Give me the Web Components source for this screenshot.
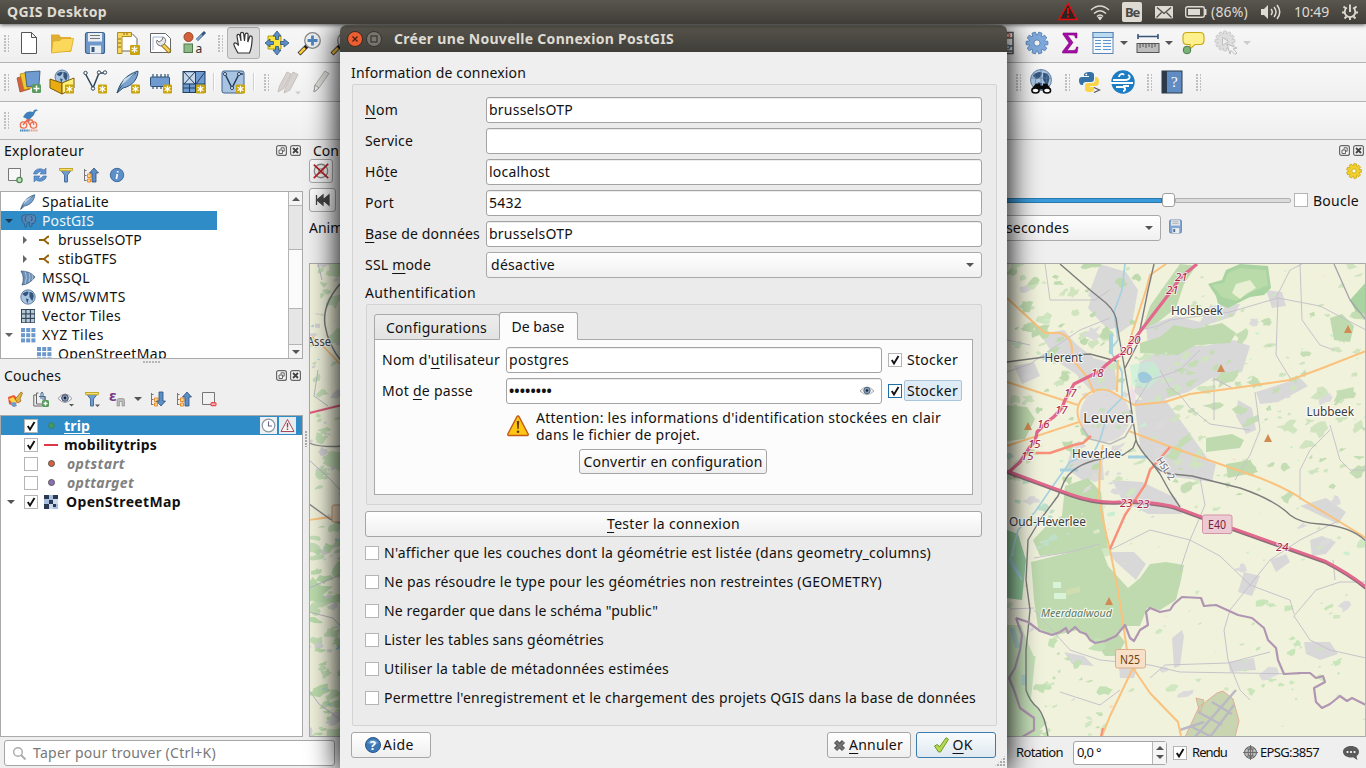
<!DOCTYPE html>
<html lang="fr">
<head>
<meta charset="utf-8">
<title>QGIS Desktop</title>
<style>
html,body{margin:0;padding:0;width:1366px;height:768px;overflow:hidden;background:#efefef;}
body{font:14px/19px "Noto Sans","Open Sans",sans-serif;color:#111;}
</style>
</head>
<body>
<qgis-desktop></qgis-desktop>
<script>
const texts = [];
function def(tag, css, html, setup) {
  customElements.define(tag, class extends HTMLElement {
    connectedCallback() {
      if (this.shadowRoot) return;
      const root = this.attachShadow({mode: 'open'});
      const body = typeof html === 'function' ? html(this) : html;
      root.innerHTML = '<style>*{box-sizing:border-box}' + css + '</style>' + body;
      if (setup) setup(this, root);
    }
  });
}

/* ---------- text run with a fixed advance width ---------- */
def('ui-text', `:host{display:inline-block;white-space:pre;flex:none}
 ::slotted(u){text-underline-offset:3px;text-decoration-thickness:1px}
 :host([link]) ::slotted(u){text-underline-offset:2px;text-decoration-skip-ink:none}`, '<slot></slot>', el => texts.push(el));

/* ---------- icons ---------- */
const star = (x, y) => `<rect x="${x}" y="${y}" width="9" height="9" rx="1" fill="#c9a40c"/><path d="M${x+4.5} ${y+1.2}v6.6M${x+1.6} ${y+2.8}l5.8 3.4M${x+7.4} ${y+2.8}l-5.8 3.4" stroke="#fff" stroke-width="1.3"/>`;
const plus = (x, y, s) => `<rect x="${x}" y="${y}" width="${s}" height="${s}" rx="1.5" fill="#5a9a60"/><path d="M${x+s/2} ${y+1.5}v${s-3}M${x+1.5} ${y+s/2}h${s-3}" stroke="#fff" stroke-width="1.4"/>`;
const gear = (cx, cy, r, n, fill, st, hole) => {
  let p = '';
  for (let i = 0; i < n; i++) {
    const a = i * 2 * Math.PI / n, w = Math.PI / n;
    [[-.85, .72], [-.5, 1], [.5, 1], [.85, .72]].forEach(([k, q]) => p += (p ? 'L' : 'M') + (cx + Math.cos(a + k * w) * r * q).toFixed(1) + ' ' + (cy + Math.sin(a + k * w) * r * q).toFixed(1));
  }
  return `<path d="${p}Z" fill="${fill}" stroke="${st}" stroke-width=".8"/><circle cx="${cx}" cy="${cy}" r="${r*.28}" fill="${hole}" stroke="${st}" stroke-width=".8"/>`;
};
const grid9 = (c, s, g, o) => { let r = ''; for (let i = 0; i < 3; i++) for (let j = 0; j < 3; j++) r += `<rect x="${o+i*(s+g)}" y="${o+j*(s+g)}" width="${s}" height="${s}" fill="${c}"/>`; return r; };
const globe = (x, y, r) => `<circle cx="${x}" cy="${y}" r="${r}" fill="#a9c4e0" stroke="#4a6c90" stroke-width=".8"/><path d="M${x-r*.8} ${y-r*.4}q${r*.5}-${r*.5} ${r*.9}-${r*.3}q-${r*.1} ${r*.5}-${r*.5} ${r*.6}zM${x+r*.2} ${y-r*.7}q${r*.6} 0 ${r*.6} ${r*.6}l-${r*.2} ${r*.7}l-${r*.4}-${r*.6}zM${x-r*.3} ${y+r*.2}l${r*.4} ${r*.1}l-${r*.2} ${r*.6}z" fill="#35557c"/>`;
const feather = '<path d="M1 23C4 13 9 5 22 1C22 8 17 16 7 18Z" fill="#7ba3cf" stroke="#2d5273" stroke-width="1"/><path d="M1 23C6 14 12 8 20 3" fill="none" stroke="#2d5273"/><path d="M5 16L19 3L8 9Z" fill="#c3d8ec"/>';
const tree = '<path d="M1.5 2v12M1.5 3.5h2M1.5 8.5h2M1.5 13.5h2" stroke="#777" fill="none"/><path d="M4.500 7h3.500v3.500H4.500zM4.500 12h3v3h-3z" fill="#ffd9a0" stroke="#f08a1c"/>';
const funnel = '<path d="M1.500 1.500h13l-5 6.500v7h-3V8Z" fill="#6f9bd1" stroke="#47719c"/><path d="M1.500 1.500h13v2.200h-13z" fill="#fbe36b" stroke="#c7a617" stroke-width=".8"/>';
const mag = '<path d="M9 15L1 23" stroke="#222" stroke-width="4"/><path d="M7 17L1.500 22.500" stroke="#fbc93d" stroke-width="2.600"/><circle cx="14.500" cy="9.500" r="7.800" fill="#efefef" stroke="#888" stroke-width="1.300"/>';
const ICONS = {
 new: '<path d="M4.500 1.500h10l5 5v16h-15zM14.500 1.500v5h5" fill="#fff" stroke="#555"/>',
 open: '<path d="M1 3.500h8l2 2.500h10v15H1z" fill="#dfae32"/><path d="M1.500 22L3 10l7-.5 2-2h11.500L21 20z" fill="#fbd85a" stroke="#d9a826" stroke-width=".8"/>',
 save: '<rect x="2.500" y="1.500" width="19" height="21" rx="2" fill="#6f99cc" stroke="#41648e" stroke-width="1.200"/><rect x="5" y="2" width="14" height="8.500" fill="#e9eef2"/><path d="M7 4.500h10M7 7.500h10" stroke="#777"/><rect x="7" y="14.500" width="11" height="8" fill="#e9eef2"/><rect x="8.500" y="16" width="3" height="5" fill="#35557c"/>',
 layout: '<path d="M2 2.500h14l5 5V20H2z" fill="#fff" stroke="#666"/><path d="M1.500 1.500h14v4h-9.500V22.500H1.500z" fill="#f7d65d" stroke="#b58c1b"/><path d="M2 8h3M2 12h3M2 16h3M8 2v2M11 2v2" stroke="#8a6a12"/>' + star(14, 14).replace(/width="9" height="9"/, 'width="10" height="10"'),
 manager: '<path d="M1.500 2.500h15l5 5V21.500H1.500z" fill="#fff" stroke="#666"/><path d="M4 19V6h10" fill="none" stroke="#9ab6d4"/><path d="M13 13l8 8" stroke="#8a6b13" stroke-width="4.500"/><path d="M13.500 13.500l7 7" stroke="#f5cf52" stroke-width="2.500"/><path d="M8 9a4 4 0 0 0 6 5l2-2a4 4 0 0 0-2-6l-1 3-3 2z" fill="#e6e6e6" stroke="#777"/>',
 style: '<circle cx="6.500" cy="6" r="4.500" fill="#d3623a" stroke="#9b4325"/><path d="M15 9l8-8" stroke="#35557c" stroke-width="3"/><path d="M15 9l5-5" stroke="#7ba3cf" stroke-width="2"/><rect x="2" y="13" width="8.500" height="8.500" fill="#8cba87" stroke="#4e7a4a"/><text x="13.500" y="21.500" font-size="12" font-family="Noto Sans" fill="#333">a</text>',
 hand: '<path d="M6 22C4 18 1 14 2 12.500c1.500-1.500 3 0 4.500 2L5 5c0-2 2.500-2.300 3 0l1 5-.5-7c0-2.300 3-2.300 3.200 0l.8 7 .6-6.500c.2-2 3-1.800 3 .2l-.3 7.300 1.700-5c.7-1.800 3-1 2.700 1C20 12 20 16 17.500 22Z" fill="#fff" stroke="#333" stroke-width="1.200"/>',
 pan: '<path d="M3 5h13v13H3z" fill="#fde43c" stroke="#b09a12"/><path d="M12 0l4 5h-2.500v3.500h-3V5H8zM12 24l-4-5h2.500v-3.500h3V19H16zM0 12l5-4v2.500h3.500v3H5V16zM24 12l-5 4v-2.500h-3.500v-3H19V8z" fill="#5c8fc9" stroke="#2d5273" stroke-width=".8"/>',
 zoomin: mag + '<path d="M14.500 4.500v10M9.500 9.500h10" stroke="#4d85bf" stroke-width="2.800"/>',
 zoomout: mag + '<path d="M9.500 9.500h10" stroke="#4d85bf" stroke-width="2.800"/>',
 datasource: '<path d="M0 8l9-3 4 14-10 3z" fill="#d3623a" stroke="#9b4325" stroke-width=".7"/><path d="M3 4l9-2 5 15-10 3z" fill="#f5c431" stroke="#a5810d" stroke-width=".7"/><path d="M8 2l15-1-1 14-12 2z" fill="#6f9bd1" stroke="#2d5273" stroke-width=".8"/>' + plus(15, 14, 9),
 geopkg: globe(12, 7, 7) + '<path d="M0 9l12 4v11L0 18z" fill="#e8ab12" stroke="#7a5a05"/><path d="M12 13l12-5v10l-12 6z" fill="#fff07a" stroke="#7a5a05"/>' + star(15, 14.5),
 vect: '<path d="M2 3L10 18L16 3H22" fill="none" stroke="#2f4458" stroke-width="1.500"/><g fill="#fff" stroke="#2f4458"><circle cx="2.500" cy="3" r="1.700"/><circle cx="10" cy="18.500" r="1.700"/><circle cx="16" cy="2.500" r="1.700"/><circle cx="22" cy="2.500" r="1.700"/></g>' + star(15, 14.5),
 feather: feather + star(15, 14.5), plume: feather,
 chip: '<path d="M4 4v15M8 4v15M12 4v15M16 4v15M19 4v15" stroke="#2d5273" stroke-width="1.200"/><rect x="1.500" y="7" width="19" height="9.500" rx="1" fill="#6f9bd1" stroke="#2d5273"/>' + star(14, 14.5),
 mesh: '<rect x="1" y="1.500" width="22" height="21" fill="#6f9bd1" stroke="#23415e"/><rect x="2" y="2.500" width="11" height="11" fill="#c7d8ea"/><path d="M1 14h22M13.500 1v22M2 2l11 12M13 2L2 14M14 14L23 2M7.500 14v9M1 18h12" stroke="#23415e" stroke-width="1" fill="none"/>' + star(14, 14.5),
 virt: '<rect x="1" y="1" width="22" height="22" rx="2" fill="#a9c3e2" stroke="#41648e"/><path d="M4 4L11 18L18 4H22" fill="none" stroke="#23415e" stroke-width="1.500"/><g fill="#fff" stroke="#23415e"><circle cx="4" cy="4" r="1.500"/><circle cx="11" cy="18" r="1.500"/><circle cx="18" cy="4" r="1.500"/></g>' + star(15, 14.5),
 pencils: '<g fill="#d8d2cf" stroke="#bdb8b6" stroke-width=".8"><path d="M1 22l1.500-6L10 2l4 2L6 19z"/><path d="M7 23l1.500-6L16 2l5 2.500L13 20z"/></g><path d="M18 21.500h6l-3 3z" fill="#ccc"/>',
 pencil: '<path d="M4 22l1-7L15 1l4 2.500L9 18z" fill="#dddbd6" stroke="#b0b0b0"/><path d="M4 22l1-7 4 3z" fill="#eee" stroke="#999"/>',
 mobility: '<path d="M8 5c2-3 6-3 8-2 1-3 4-3 5-1-2-1-3 1-4 4l-4 4-1 4-2-1v-3l-4-2z" fill="#3f7fbb"/><g fill="none" stroke="#ee6d4d" stroke-width="1.300"><circle cx="6.500" cy="16" r="3.200"/><circle cx="16.500" cy="16" r="3.200"/><path d="M6 16l4-5h5l2 5M10 11l3 5"/></g><path d="M3 21.500h9" stroke="#3f7fbb" stroke-width="2" stroke-dasharray="1.300 .5"/><path d="M12 21.500h9" stroke="#ee9d85" stroke-width="2" stroke-dasharray="1.300 .5"/>',
 abacus: '<path d="M1 1.500h21v21H1zM1 7h21M1 15h21M1 20h21" fill="none" stroke="#555" stroke-width="1.500"/><g fill="#f2b3a8" stroke="#b43c2c"><circle cx="17" cy="4.500" r="2"/><circle cx="11" cy="4.500" r="2"/></g><circle cx="17" cy="16" r="2" fill="#a9c9e8" stroke="#35658c"/>',
 gear: gear(12, 12, 11, 10, '#7fa9dc', '#4a79b0', '#f4f4f4'),
 ygear: gear(8, 8, 7.5, 9, '#f1cf2c', '#c9a40c', '#fff'),
 sigma: '<path d="M5 2h14v5h-1.500C17 4.500 16 4 14 4H9.500l5.500 7.500L9 19.500h6c2 0 3-1 3.500-3.500H20l-1 6H4.500v-1.500L11 12 5 3.500z" fill="#a50ba5" stroke="#7c077c" stroke-width=".6"/>',
 table: '<rect x="2" y="1.500" width="20" height="21" fill="#f6fafd" stroke="#5c87b5"/><rect x="2" y="1.500" width="20" height="5" fill="#b9dcf2" stroke="#5c87b5"/><path d="M4 9.500h6M4 12.500h6M4 15.500h6M4 18.500h6M12 9.500h8M12 12.500h8M12 15.500h8M12 18.500h8" stroke="#5c94cc" stroke-width="1.200"/>',
 ruler: '<path d="M2 5.500h20M2 3v5M22 3v5" stroke="#35557c" stroke-width="1.600"/><rect x="1" y="12.500" width="22" height="9" fill="#bdbdbd" stroke="#555"/><path d="M4 13v4M7 13v3M10 13v4M13 13v3M16 13v4M19 13v3" stroke="#555"/>',
 tip: '<path d="M6 1.500h13q4 0 4 4v4q0 4-4 4h-5L9 18l0-4.500H6q-4 0-4-4v-4q0-4 4-4z" fill="#fdf08d" stroke="#c9a80f" stroke-width="1.100"/><circle cx="6" cy="19" r="3.800" fill="#79b377" stroke="#4e7a4a"/>',
 faded: gear(11, 10, 10, 12, '#dedede', '#c4c4c4', '#eee') + '<path d="M8.500 6.500l6 4-6 4z" fill="#eee" stroke="#c0c0c0"/><path d="M13 13l10 4-4 1 4 4-2 1.500-4-4-1 3.500z" fill="#f3f3f3" stroke="#bbb"/>',
 search: globe(12, 10, 10.5) + '<path d="M12 0v14M2 8h20M5 3q3 6 1 12M19 3q-3 6-1 12" stroke="#587899" fill="none" stroke-width=".7"/><path d="M7 13.500h4v2h3v-2h4l4 6H2z" fill="#0a0a0a"/><ellipse cx="6.500" cy="20.500" rx="3.600" ry="2.500" fill="#fff" stroke="#0a0a0a" stroke-width="1.500"/><ellipse cx="18" cy="20.500" rx="3.600" ry="2.500" fill="#fff" stroke="#0a0a0a" stroke-width="1.500"/>',
 python: '<path d="M11 2c4 0 5 1 5 3v4c0 2-1 3-3 3H8c-2 0-3 1-3 3H4c-2 0-3-2-3-4.500S2 7 4 7h7V6H6V4.500C6 3 8 2 11 2z" fill="#3572a5"/><circle cx="8.300" cy="4.500" r=".9" fill="#fff"/><path d="M12 22c-4 0-5-1-5-3v-3c0-2 1-3 3-3h4c2 0 3-1 3-3V7h1c2 0 3 2 3 4.500S20 16 18 16h-6v1h4v2c0 2-1 3-4 3z" fill="#fbd447"/><path d="M16 17.500l5.500 2.500-5.500 2.500" fill="none" stroke="#555" stroke-width="1.200"/>',
 wind: '<circle cx="12" cy="12" r="11.700" fill="#1d7dc4"/><g fill="none" stroke="#fff" stroke-width="1.800"><path d="M2 10h12c5 0 6-4 3-5M0 13h22M5 17h6c4 0 4 4 1 4M8 7c0-3 4-4 5-2M12 16h6"/></g>',
 book: '<rect x="2" y="1" width="20" height="22" fill="#5f8cc2" stroke="#2b3b4c"/><rect x="2" y="1" width="5" height="22" fill="#2b3b4c"/><text x="11" y="17" font-size="15" font-family="Liberation Serif" fill="#fff">?</text>',
 addbox: '<path d="M1.500 1.500h12v12h-12z" fill="#f7f7f7" stroke="#777"/><circle cx="12.500" cy="13" r="2.600" fill="#bfe0b8" stroke="#4d8a52" stroke-width="1.300"/>',
 refresh: '<path d="M1.500 7A6.500 6 0 0 1 12 3l2-2v6H8l2-2A4 4 0 0 0 5 7zM14.500 9A6.500 6 0 0 1 4 13l-2 2V9h6l-2 2a4 4 0 0 0 5-2z" fill="#5f93d0" stroke="#3d70ab" stroke-width=".6"/>',
 funnel, funnelm: funnel + '<path d="M11 13.500h5l-2.500 2.500z" fill="#555"/>',
 collapse: tree + '<path d="M11 1l4.500 5H13v9H9V6H6.500z" fill="#5c8fc9" stroke="#2d5273" stroke-width=".8"/>',
 expand: tree + '<path d="M11 15L6.500 10H9V1h4v9h2.500z" fill="#5c8fc9" stroke="#2d5273" stroke-width=".8"/>',
 info: '<circle cx="8" cy="8" r="6.700" fill="#5d8fc9" stroke="#3f6ca0"/><path d="M8.700 4v1.500M8.300 7l-.9 5" stroke="#fff" stroke-width="1.700"/>',
 brush: '<path d="M1 6l6-2 4 4-3 8-6-3z" fill="#f0552d"/><path d="M2 8l4-2 4 5-4 2z" fill="#fbd84a"/><path d="M3 12l5-1 2 4-4 1z" fill="#6f9bd1"/><path d="M8 8l2-2 4-5 1.500 1-2.500 6 1 2-3 2z" fill="#e2b23d" stroke="#8b6517" stroke-width=".7"/>',
 group: '<path d="M3 4H.8v11H9M5.500 2H3.500v11H12V5" fill="none" stroke="#666"/><path d="M6 5.500h6V12M8 8V2q1-1.500 2 0v7" fill="none" stroke="#3f6c94"/>' + plus(9, 9, 7),
 eye: '<path d="M1 8q7-8 14 0q-7 7-14 0z" fill="#f3f3f3" stroke="#aaa"/><circle cx="8" cy="7.500" r="3.200" fill="#7fa4cf" stroke="#567"/><circle cx="8" cy="7.500" r="1.300" fill="#222"/>',
 eyem: '<path d="M0 7.500q7-9 14 0q-7 8-14 0z" fill="#f3f3f3" stroke="#999"/><circle cx="7" cy="7" r="3.300" fill="#86a8cf" stroke="#446"/><circle cx="7" cy="7" r="1.400" fill="#222"/><path d="M11 13h5l-2.500 2.500z" fill="#555"/>',
 eps: '<text x="0" y="10" font-size="15" font-weight="700" font-family="Noto Sans" fill="#7a3b86">ε</text><path d="M8 15V9.500q0-2 2-2h4q1.500 0 1.500 2V15h-2.500v-4.500h-2.500V15z" fill="#bbb" stroke="#888" stroke-width=".6"/>',
 remove: '<path d="M1.500 1.500h12v12h-12z" fill="#f2f2f2" stroke="#777"/><rect x="9.500" y="11" width="6" height="4.200" rx="1.500" fill="#e8444a"/><path d="M10.500 13.100h4" stroke="#fff"/>',
 down: '<path d="M0 0h8l-4 4z" fill="currentColor"/>', up: '<path d="M0 4h8L4 0z" fill="currentColor"/>', right: '<path d="M0 0v8l4-4z" fill="currentColor"/>',
 elephant: '<path d="M2 3q2-2 5-1 4-1 7 0 3 2 1 7l-2 2-1-1v3q-1 2-2.500 0V9L7 10q0 4-1 4.500-1.500 0-1.800-4Q1 8 2 3z" fill="#5386b4" stroke="#2a5d88" stroke-width=".9"/><path d="M6 3q-2 3 0 6M11 3q2 2 .5 5" fill="none" stroke="#2a5d88"/>',
 conn: '<path d="M0 6h5M10 2.500q-1.500 0-2 1L5 6l3 2.500q.5 1 2 1" fill="none" stroke="#94600b" stroke-width="1.900"/>',
 mssql: '<path d="M1 1q9 0 14 6-5 7-13 8 3-7-1-14z" fill="#6d90b8" stroke="#34506d" stroke-width=".7"/><path d="M5 1.500q3 6 0 12.500M9 3q2 4 0 9M12 4.500q1.500 3 0 5.500" stroke="#c9d8e8" fill="none" stroke-width=".7"/>',
 globe: globe(8, 8, 7.2),
 vtiles: '<rect x="1" y="1" width="14" height="14" fill="#33485c"/>' + grid9('#b8cad8', 3.300, 1.200, 2),
 xyz: grid9('#6d98cb', 4, 1.200, 1),
 checker: '<rect width="14" height="14" fill="#a9bfdf"/><path d="M0 0h5v4H0zM9 0h5v4H9zM5 5h4v4H5zM0 9h5v5H0z" fill="#2a3a50"/><path d="M9 4h5v5H9zM5 9h4v5H5z" fill="#cfdcee"/><path d="M9 9h3v3H9z" fill="#2a3a50"/>',
 clock: '<rect width="17" height="17" fill="#eef1f4"/><circle cx="8.500" cy="8.500" r="6.300" fill="#fff" stroke="#8b98a3" stroke-width="1.200"/><path d="M8.500 4.500v4.500h3.500" fill="none" stroke="#668" stroke-width="1.100"/>',
 alert: '<rect width="17" height="17" fill="#e6ebef"/><path d="M8.500 2.500L15 14.500H2z" fill="#f7f7f7" stroke="#a34b58"/><path d="M8.500 6v4.500M8.500 11.500v1.500" stroke="#a3384a" stroke-width="1.400"/>',
 wifi: '<g fill="none" stroke="#dfdbd2" stroke-width="1.600"><path d="M1 7q9-8 18 0M4 10.500q6-5.500 12 0M7 13.500q3-3 6 0"/></g><path d="M10 17.500l-2.500-3q2.500-2 5 0z" fill="#dfdbd2"/>',
 redtri: '<path d="M10 1.500L19 17.500H1z" fill="#2b2420" stroke="#e01010" stroke-width="1.400"/><path d="M10 6v6M10 13.500v2" stroke="#e01010" stroke-width="1.700"/>',
 mail: '<rect x="0" y="0" width="18" height="12.500" rx="1" fill="#dfdbd2"/><path d="M2 1.500l7 6 7-6M1.500 11.500l5-5M16.500 11.500l-5-5" fill="none" stroke="#4a4842" stroke-width="1.200"/>',
 battery: '<rect x=".7" y=".7" width="18.600" height="10.600" rx="2" fill="none" stroke="#dfdbd2" stroke-width="1.400"/><rect x="3" y="3" width="12" height="6" fill="#dfdbd2"/><path d="M20.500 3v6" stroke="#dfdbd2" stroke-width="2"/>',
 sound: '<path d="M0 5h3l4-4v14L3 11H0z" fill="#dfdbd2"/><g fill="none" stroke="#dfdbd2" stroke-width="1.500"><path d="M10 5q2.500 3 0 6M13 3q4 5 0 10M16 1q5.500 7 0 14"/></g>',
 power: '<path d="M4.800 3.600a5.300 5.300 0 1 0 6.400 0" fill="none" stroke="#dfdbd2" stroke-width="1.800"/><g stroke="#dfdbd2" stroke-width="1.900"><path d="M8 .5v7.500M1.500 2.500l2.500 2M14.500 2.500l-2.500 2M0 8.500h3M16 8.500h-3M2.500 14.500l2-2M13.500 14.500l-2-2M8 16v-2.500"/></g>',
 clockx: '<circle cx="10" cy="10" r="7.500" fill="#eee" stroke="#888" stroke-width="1.400"/><circle cx="10" cy="10" r="3" fill="none" stroke="#aaa"/><path d="M2 3l16 15M18 2L2 18" stroke="#b32025" stroke-width="1.900"/>',
 rewind: '<path d="M1.500 1v10M8 1v10L2 6zM14 1v10L8 6z" fill="#444" stroke="#444" stroke-width="1.300"/>',
 float: '<rect x=".6" y=".6" width="9.800" height="9.800" rx="2" fill="#f6f6f6" stroke="#666" stroke-width="1.200"/><path d="M3 5h3.500v3.500H3zM5 4.500V2.800h3.200V6.200H7" fill="none" stroke="#555" stroke-width=".9"/>',
 close: '<rect x=".6" y=".6" width="9.800" height="9.800" rx="2" fill="#f6f6f6" stroke="#666" stroke-width="1.200"/><path d="M3 3l5 5M8 3L3 8" stroke="#444" stroke-width="1.900"/>',
 warn: '<path d="M12 2q.8 0 1.200.9l9 17.200q.4 1.400-.9 1.400H2.700q-1.300 0-.9-1.400l9-17.200Q11.200 2 12 2z" fill="#fcc613" stroke="#c35a1c" stroke-width="1.300"/><path d="M10.800 7h2.400l-.6 8h-1.200z" fill="#6a3410"/><circle cx="12" cy="17.800" r="1.300" fill="#6a3410"/>',
 help: '<circle cx="8" cy="8" r="7.500" fill="#3b77b2" stroke="#28598b"/><path d="M2 6q6-7 12 0-6 3-12 0z" fill="#7aa9d8" opacity=".6"/><text x="4.700" y="12.800" font-size="13" font-weight="700" font-family="Noto Sans" fill="#fff">?</text>',
 cross: '<path d="M2.500 2.500l8 8M10.500 2.500l-8 8" stroke="#555" stroke-width="4.400"/><path d="M3 3l7.500 7.500M10.500 3L3 10.500" stroke="#777" stroke-width="2"/>',
 ok: '<path d="M1.500 9l3-1.500 2 2.500L13 .8l2.500 1.500L7.500 15H5.500z" fill="#b4d957" stroke="#6f9a1e"/>',
 glass: '<circle cx="6" cy="6" r="4.300" fill="none" stroke="#aaa" stroke-width="1.400"/><path d="M9 9l4.500 4.500" stroke="#aaa" stroke-width="1.800"/>',
 proj: '<circle cx="7.500" cy="7.500" r="6" fill="#bbb" stroke="#666"/><path d="M0 7.500h15M7.500 0v15M3 3.500q4.500 2 9 0M3 11.500q4.500-2 9 0M7.500 1.500q-5 6 0 12q5-6 0-12" fill="none" stroke="#666" stroke-width=".9"/>',
 bubble: '<path d="M8 1c4.500 0 8 2.400 8 5.800 0 2-1 3.400-2.500 4.400L14.500 15 10 12.300Q9 12.600 8 12.600c-4.500 0-8-2.500-8-5.800S3.500 1 8 1z" fill="#5a5a5a"/><g fill="#fff"><circle cx="4.500" cy="7" r="1.100"/><circle cx="8" cy="7" r="1.100"/><circle cx="11.500" cy="7" r="1.100"/></g>',
 wclose: '<circle cx="8" cy="8" r="7.500" fill="#ec5e31" stroke="#3a2a22"/><path d="M5.500 5.500l5 5M10.500 5.500l-5 5" stroke="#4a2214" stroke-width="1.300"/>',
 wmax: '<circle cx="8" cy="8" r="7.500" fill="#77756e" stroke="#34332f"/><rect x="5" y="5" width="6" height="6" fill="none" stroke="#35342f" stroke-width="1.200"/>'
};
def('q-icon', ':host{display:inline-flex;flex:none}svg{display:block;overflow:visible}', el => {
  const w = +el.getAttribute('w') || +el.getAttribute('s') || 16, h = +el.getAttribute('h') || w;
  const box = el.getAttribute('box') || `${w} ${h}`;
  return `<svg width="${w}" height="${h}" viewBox="0 0 ${box}">${ICONS[el.getAttribute('name')]}</svg>`;
});
const ic = (n, box, s) => `<q-icon name="${n}" s="${s||box}" box="${box} ${box}"></q-icon>`;

/* ---------- controls ---------- */
def('ui-field', `:host{display:flex;align-items:center;height:26px;padding:0 6px 0 2px;background:#fff;border:1px solid #a3a3a3;border-radius:3px;box-sizing:border-box;box-shadow:inset 0 1px 0 #ececec}`, '<slot></slot>');
def('ui-combo', `:host{display:flex;align-items:center;justify-content:space-between;height:26px;padding:0 7px 0 4px;background:linear-gradient(#fff,#f0f0f0);border:1px solid #a9a9a9;border-radius:3px;box-sizing:border-box;color:#111}q-icon{color:#555}`, '<slot></slot><q-icon name="down" w="8" h="4"></q-icon>');
def('ui-button', `:host{display:flex;align-items:center;justify-content:center;gap:3px;height:26px;background:linear-gradient(#fff,#efefef);border:1px solid #a6a6a6;border-radius:3px;box-sizing:border-box}
 :host([primary]){background:linear-gradient(#f8fbfd,#dfe9f0);border-color:#3a7cae}`, '<slot></slot>');
def('ui-check', `:host{display:flex;align-items:center;gap:5px}
 i{width:14px;height:14px;background:#fff;border:1px solid #b5b5b5;display:block;flex:none}
 :host([focus]) i{border:1px solid #1f6ea5}
 :host([focus]) span{background:#dfebf5;border:1px solid #a9c5dc;border-radius:2px;margin:0 -4px 0 -3px;padding:0 3px 0 2px}
 span{display:flex}svg{display:block}`,
 el => `<i>${el.hasAttribute('on') ? '<svg width="12" height="12"><path d="M2.800 6L5 9.500 9.500 2" fill="none" stroke="#111" stroke-width="1.900"/></svg>' : ''}</i><span><slot></slot></span>`);
def('ui-grip', `:host{display:block;width:5px;height:17px;flex:none;background:radial-gradient(circle at 1px 1px,#bdbdbd .7px,transparent .9px) 0 0/4px 3px}`, '');
def('ui-sep', ':host{display:block;width:1px;height:18px;background:#cfcfcf;flex:none;box-shadow:1px 0 #fff}', '');
def('ui-toolbar', `:host{display:flex;align-items:center;height:39px;border-bottom:1px solid #b4b4b4;background:linear-gradient(#f8f8f8,#efefef);box-sizing:border-box}
 div{display:flex;align-items:center;height:100%}.l{width:999px;padding-left:4px;overflow:hidden}.r{flex:1;overflow:hidden}`,
 '<div class="l"><slot></slot></div><div class="r"><slot name="right"></slot></div>');
def('tool-item', `:host{display:flex;align-items:center;justify-content:center;flex:none;width:33px;height:32px;box-sizing:border-box;color:#555}
 :host([active]){background:#dcdcdc;border:1px solid #b0b0b0;border-radius:3px}`, '<slot></slot>');
def('dock-header', `:host{display:flex;align-items:center;height:21px;padding:0 2px 0 4px;gap:3px;box-sizing:border-box}
 slot{display:block;flex:1}`, '<slot></slot><q-icon name="float" s="11"></q-icon><q-icon name="close" s="11"></q-icon>');

/* ---------- top panel ---------- */
def('desktop-bar', `:host{display:flex;align-items:center;height:24px;padding:0 8px 0 7px;background:linear-gradient(#59564e,#3f3d38);color:#dfdbd2;box-sizing:border-box;position:relative;z-index:3;box-shadow:0 1px 4px rgba(0,0,0,.65)}
 .t{font-weight:700;flex:1}.b{background:#dfdbd2;color:#4a4842;font-weight:700;font-size:13px;line-height:20px;width:20px;height:20px;border-radius:2px;text-align:center;margin:0 12px}
 div{display:flex;align-items:center}ui-text{line-height:22px}`,
 `<div class="t"><ui-text w="100">QGIS Desktop</ui-text></div><div>
 <q-icon name="redtri" s="20" box="20 20"></q-icon><q-icon name="wifi" s="20" box="20 20" style="margin:2px 0 0 12px"></q-icon>
 <div class="b"><ui-text w="14" style="margin-left:3px">Be</ui-text></div><q-icon name="mail" w="18" h="13" style="margin-left:1px"></q-icon>
 <q-icon name="battery" w="22" h="12" style="margin-left:12px"></q-icon><ui-text w="37" style="margin-left:4px">(86%)</ui-text>
 <q-icon name="sound" w="20" h="16" style="margin-left:13px"></q-icon><ui-text w="35" style="margin-left:13px">10:49</ui-text>
 <q-icon name="power" s="16" style="margin-left:13px"></q-icon></div>`);

/* ---------- browser dock ---------- */
def('tree-row', `:host{display:flex;align-items:center;height:19px;box-sizing:border-box;color:#111}
 .a{width:16px;display:flex;justify-content:center;color:#666}.i{width:16px;display:flex;justify-content:center;margin:0 6px 0 3px}
 :host([selected]){background:#308cc6;color:#eef6fb;width:216px}:host([selected]) .a{color:#1c3a52}
 :host([child]){padding-left:16px}`,
 el => { const a = el.getAttribute('arrow'); const n = el.getAttribute('icon');
  return `<span class="a">${a ? `<q-icon name="${a}" w="${a==='right'?4:8}" h="${a==='right'?8:4}"></q-icon>` : ''}</span><span class="i">${n==='conn' ? '<q-icon name="conn" w="10" h="12"></q-icon>' : `<q-icon name="${n}" s="16" box="${n==='plume'?'24 24':'16 16'}"></q-icon>`}</span><slot></slot>`; });
def('ui-scroll', `:host{display:flex;flex-direction:column;width:14px;border-left:1px solid #b4b4b4;background:#e6e6e6;box-sizing:border-box;color:#555}
 b{display:flex;height:14px;align-items:center;justify-content:center;background:#f4f4f4;border-bottom:1px solid #b4b4b4;box-sizing:border-box}
 b:last-child{border-bottom:0;border-top:1px solid #b4b4b4}i{height:60px;margin-top:43px;background:#fbfbfb;border:1px solid #b4b4b4;border-width:1px 0;box-sizing:border-box}em{flex:1}`,
 '<b><q-icon name="up" w="8" h="4"></q-icon></b><i></i><em></em><b><q-icon name="down" w="8" h="4"></q-icon></b>');
def('browser-dock', `:host{display:block}.tools{display:flex;align-items:center;gap:9.400px;height:27px;padding-left:7px}
 .box{display:flex;height:168px;margin-top:3px;border:1px solid #aaa;background:#fff;overflow:hidden;box-sizing:border-box}.rows{flex:1;overflow:hidden}
 .dots{height:6px;width:18px;margin:0 auto;background:radial-gradient(circle at 1px 1px,#b5b5b5 .8px,transparent 1px) 0 2px/3px 8px repeat-x}`,
 `<dock-header><ui-text w="80">Explorateur</ui-text></dock-header>
 <div class="tools">${['addbox','refresh','funnel','collapse','info'].map(n => ic(n,16)).join('')}</div>
 <div class="box"><div class="rows">
 <tree-row icon="plume"><ui-text w="67">SpatiaLite</ui-text></tree-row>
 <tree-row icon="elephant" arrow="down" selected><ui-text w="52">PostGIS</ui-text></tree-row>
 <tree-row icon="conn" arrow="right" child><ui-text w="84">brusselsOTP</ui-text></tree-row>
 <tree-row icon="conn" arrow="right" child><ui-text w="59">stibGTFS</ui-text></tree-row>
 <tree-row icon="mssql"><ui-text w="48">MSSQL</ui-text></tree-row>
 <tree-row icon="globe"><ui-text w="84">WMS/WMTS</ui-text></tree-row>
 <tree-row icon="vtiles"><ui-text w="79">Vector Tiles</ui-text></tree-row>
 <tree-row icon="xyz" arrow="down"><ui-text w="62">XYZ Tiles</ui-text></tree-row>
 <tree-row icon="xyz" child><ui-text w="109">OpenStreetMap</ui-text></tree-row>
 </div><ui-scroll></ui-scroll></div><div class="dots"></div>`);

/* ---------- layers dock ---------- */
def('layer-row', `:host{display:flex;align-items:center;height:19px;font-weight:700;box-sizing:border-box;padding-right:6px}
 .a{width:20px;display:flex;justify-content:center;color:#555;margin-left:0}.s{width:16px;display:flex;align-items:center;justify-content:center;margin:0 5px 0 5px}
 i{display:block;width:7px;height:7px;border-radius:50%;border:1px solid #555;background:var(--c)}i.line{width:14px;height:2px;border:0;border-radius:0}
 slot{display:block;flex:1}:host([selected]){background:#308cc6;color:#fff}:host([selected]) i{border-color:#3a7d78}:host([off]){color:#808080;font-style:italic}.e{display:flex;gap:2px}`,
 el => `<span class="a">${el.hasAttribute('arrow') ? '<q-icon name="down" w="8" h="4"></q-icon>' : ''}</span><span style="width:3px"></span><ui-check ${el.hasAttribute('off') ? '' : 'on'}></ui-check><span class="s" style="margin-left:0">${el.getAttribute('kind')==='raster' ? '<q-icon name="checker" s="14"></q-icon>' : `<i class="${el.getAttribute('kind')}" style="--c:${el.getAttribute('color')}"></i>`}</span><slot></slot>${el.hasAttribute('selected') ? '<span class="e"><q-icon name="clock" s="17"></q-icon><q-icon name="alert" s="17"></q-icon></span>' : ''}`);
def('layers-dock', `:host{display:flex;flex-direction:column;flex:1}.tools{display:flex;align-items:center;height:27px;padding-left:7px;gap:9.500px}
 .box{flex:1;margin-top:3px;border:1px solid #aaa;background:#fff}.d{color:#555;margin:0 -1px}`,
 `<dock-header style="height:20px"><ui-text w="57">Couches</ui-text></dock-header>
 <div class="tools">${['brush','group','eyem','funnelm','eps'].map(n => ic(n,16)).join('')}<q-icon class="d" name="down" w="8" h="4"></q-icon>${['expand','collapse','remove'].map(n => ic(n,16)).join('')}</div>
 <div class="box">
 <layer-row selected color="#3e9a62"><ui-text w="26" link><u>trip</u></ui-text></layer-row>
 <layer-row kind="line" color="#e0364a"><ui-text w="93">mobilitytrips</ui-text></layer-row>
 <layer-row off color="#d9603a"><ui-text w="58" style="margin-left:3px">optstart</ui-text></layer-row>
 <layer-row off color="#8d71b4"><ui-text w="67" style="margin-left:3px">opttarget</ui-text></layer-row>
 <layer-row kind="raster" arrow><ui-text w="115" style="margin-left:2px">OpenStreetMap</ui-text></layer-row>
 </div>`);

/* ---------- temporal controller ---------- */
def('ui-slider', `:host{display:flex;align-items:center;height:14px}
 .f{height:5px;background:#3a9bdc;border:1px solid #2a79ad;box-sizing:border-box;flex:1}.e{height:5px;width:116px;border:1px solid #b0b0b0;border-radius:0 2px 2px 0;background:#dcdcdc;box-sizing:border-box}
 .k{width:13px;height:14px;border:1px solid #a0a0a0;border-radius:3px;background:#fff;box-sizing:border-box}`, '<div class="f"></div><div class="k"></div><div class="e"></div>');
def('temporal-dock', `:host{display:block;height:123px;overflow:hidden}.row{display:flex;justify-content:space-between;align-items:center}
 ui-button{width:27px;height:24px}.right{display:flex;align-items:center}ui-text{line-height:19px}`,
 `<dock-header><ui-text>Con</ui-text></dock-header>
 <div class="row" style="height:20px;align-items:flex-start;margin-top:-2px"><ui-button style="width:24px">${ic('clockx',20,18)}</ui-button><q-icon name="ygear" s="16" box="16 16" style="margin:4px 4px 0 0"></q-icon></div>
 <div class="row" style="height:28px;margin-top:7px"><ui-button><q-icon name="rewind" w="15" h="12"></q-icon></ui-button>
 <div class="right"><ui-slider style="width:285px;margin-right:3px"></ui-slider><ui-check><ui-text w="46">Boucle</ui-text></ui-check><span style="width:7px"></span></div></div>
 <div class="row" style="height:27px;margin-top:0"><ui-text>Anim</ui-text><div class="right"><ui-combo style="width:160px;padding-right:7px;padding-left:4px"><ui-text w="63">secondes</ui-text></ui-combo><q-icon name="save" s="15" box="24 24" style="margin:0 183px 3px 7px;opacity:.85"></q-icon></div></div>`);

/* ---------- map ---------- */
function buildMap() {
  let seed = 77;
  const R = () => (seed = (seed * 16807) % 2147483647) / 2147483647;
  const blob = (x, y, rx, ry) => {
    let p = ''; const n = 8 + (R() * 6 | 0), rot = -.7 + R() * .8;
    for (let i = 0; i < n; i++) { const a = i * 6.283 / n, q = .4 + R() * .8, u = Math.cos(a) * rx * q, v = Math.sin(a) * ry * q;
      p += (i ? 'L' : 'M') + (x + u * Math.cos(rot) - v * Math.sin(rot)).toFixed(1) + ' ' + (y + u * Math.sin(rot) + v * Math.cos(rot)).toFixed(1); }
    return p + 'Z';
  };
  const many = (n, x0, x1, y0, y1, s, c) => { let d = ''; while (n--) { const k = .25 + 1.3 * R() * R(); d += blob(x0 + R() * (x1 - x0), y0 + R() * (y1 - y0), s * k, s * k * (.35 + R() * .5)); } return `<path d="${d}" fill="${c}"/>`; };
  const L = (d, c, w, x = '') => `<path d="${d}" fill="none" stroke="${c}" stroke-width="${w}" stroke-linejoin="round" ${x}/>`;
  const G = '#bfdaaf', U = '#d9d8d9', W = '#a6d1df', O = '#fac27d', M = '#e2688d', RL = '#7c7c7c';
  let s = '<rect x="309" y="263" width="1057" height="474" fill="#f1f2dc"/>';
  s += `<path d="M1100 264l26 8 12 18-6 34-14 10-10-28-20-10zM1040 334l24-4 12 14 18 14 20 6 4 26-26 2-16-18-18-12zM1094 290l20 6 8 30-14 4-20-22zM1146 326l30-10 24 6 10-16 30-2-6 12-30 10-16 16-40 4zM1140 362l30-18 34 2 30-6 16 6-8 26-30 6-24 14-40 12-14-12zM1134 400l30-2 22 30 24 34 -16 8-34-8-20-16zM1072 448l30 6 2 26-22 0-16-12zM1136 444l44 8 36 12-4 18-46-6zM1112 480l30 2 34 16 6 16-34 0-26-14zM1108 552l26 0 12 12-10 16-20-18zM1118 656l22 0-6 22-14 0zM1244 572l16 4-8 20-14-4zM1310 540l12-4 14 6-10 12-14 2zM1304 642l26 0 8 12-18 6-14-6zM1270 560l16-6 4 8-14 10zM1256 392l44-14 8 8-30 16-18 2zM1238 400l14 8 4 22-10 4-10-18zM1266 290l16 2 4 14-14 2zM1014 366l20-4 6 14-18 8zM1064 652l20 4 10 10-22-2zM1172 638l10-8 2 6-4 30-6 2zM1228 662l26-4 2 12-26 2zM1300 506l26-8 20 14-8 12z" fill="${U}"/>`;
  s += many(120, 1007, 1366, 263, 480, 9, '#cfe4bf') + many(60, 1007, 1366, 480, 737, 6, '#d0e7c2') + many(45, 1007, 1366, 263, 560, 4, '#c8efd0') + many(46, 1007, 1140, 263, 480, 9, G);
  s += many(60, 1140, 1366, 310, 500, 10, '#c4ddb4') + many(26, 1007, 1366, 263, 737, 9, '#dcdbdc') + many(30, 1007, 1366, 263, 737, 2.4, '#f5dcc4') + many(24, 1230, 1366, 590, 700, 6, '#c9e6bb');
  s += `<path d="M1208 284L1222 280 1226 270 1240 264 1268 266 1271 288 1264 295 1250 297 1238 303 1228 308 1218 304 1216 296ZM1366 282L1350 300 1356 312 1366 314Z" fill="#a9d3a0"/><path d="M1212 285l12-2 4-10 12-5 26 2 2 15-18 8-14 8-14-4z" fill="#b9dba9"/><path d="M1236 284l14-4 6 8-10 6-6 5-8-6z" fill="#e9efd2"/>
  <path d="M1180 264L1196 266 1184 284 1176 308 1158 322 1142 330 1150 306ZM1330 318l12-4 12 12-4 16-16-2zM1140 343l20-6 14-12 20 4 28-6 14 10-6 10-34 2-18 10-38-2zM1007 405l20 2 8 12-10 20-18 2zM1206 438l26-4 12 6-4 8-34 4zM1226 464l24-4 8 12-30 6z" fill="${G}"/>
  <path d="M1031 562L1100 545 1108 566 1128 588 1140 578 1150 564 1166 562 1184 565 1181 580 1176 600 1160 610 1147 608 1140 626 1125 626 1112 636 1095 643 1078 630 1052 636 1038 628 1034 600Z" fill="${G}"/><path d="M1065 486L1088 478 1101 492 1108 548 1040 556 1033 540 1050 522 1062 516Z" fill="${G}"/>
  <path d="M1095 642l22-10 8 10-8 14-12 0z" fill="${G}"/><path d="M1007 530L1018 534 1026 560 1022 600 1007 598Z" fill="#93c79b"/><path d="M1007 625l14 0 6 16 8 18-4 40 16 24-14 13H1007Z" fill="#c5dfb8"/>
  <path d="M1054 593h12v6h-12zM1053 582h8v6h-8z" fill="#d8f3d8"/><path d="M1066 590l14-4v6l-14 4z" fill="#cfddb0"/><ellipse cx="1105" cy="416" rx="25" ry="26" fill="#dedbdc"/>`;
  s += many(22, 1078, 1170, 380, 500, 7, '#dcd9da') + many(14, 1085, 1130, 395, 440, 4, '#c8dfc0') + many(16, 1130, 1200, 350, 470, 6, '#cde5c0') + many(14, 1007, 1080, 450, 560, 6, '#bfe0c8') + many(10, 1034, 1120, 500, 550, 4, '#dfe8c6') + many(20, 1030, 1110, 640, 737, 8, '#c4e0b5');
  s += `<path d="M1130 365l24-4 8 14-14 14-16-4z" fill="#c2f0d8" opacity=".6"/><path d="M1138 374q6-5 12 1t-5 8q-7 1-7-9z" fill="#9cc9dc"/><path d="M1131 384l5 12-2 10-4-10z" fill="#efdfe8"/>`;
  s += L('M1125 264L1122 290 1114 312 1118 340 1110 350 1122 372 1122 398 1108 412 1100 440 1094 452 1070 462 1050 490 1035 512 1018 530 1010 560 1022 580', W, 1.7) + L('M1111 334v20', W, 4) + L('M1128 457h20M1060 470h18', W, 3) + L('M1012 628l6 20M1010 560l10 16 M1024 675v10', '#9cc4d4', 5, 'opacity=".6"');
  const mr = ['M1007 372L1030 364 1050 350 1080 330 1110 318','M1140 330L1158 326 1170 320 1200 316 1230 312 1278 298 1276 355','M1276 298L1290 270 1302 264','M1278 298L1320 306 1366 330','M1200 350L1180 370 1150 380 1135 404','M1160 370L1170 388 1180 395 1190 408 1210 424 1250 430','M1255 392L1260 430 1250 455 1235 480','M1276 355L1290 378','M1330 430L1310 450 1300 470 1300 500','M1330 425L1340 460 1350 470 1366 470','M1300 264L1302 320 1320 345 1334 350','M1200 478L1205 505 1190 540 1180 570','M1250 585L1230 610 1224 630 1228 660 1240 690 1250 700','M1110 550L1150 530 1190 540 1220 556 1250 585 1270 560 1300 540 1340 520','M1034 558L1070 552 1100 544','M1034 610L1070 650 1100 660 1150 665 1180 672 1300 674','M1250 585L1290 600 1294 614','M1294 616L1316 590 1340 582 1366 582','M1333 560L1335 580','M1294 616L1310 640 1330 650 1366 658','M1060 692L1100 705 1120 690','M1045 264L1050 300 1095 300 1110 290','M1213 378L1232 388 1214 378V420','M1007 340L1030 345','M1150 678L1165 665 1228 663 1270 652','M1010 609L1034 608'];
  mr.forEach(d => s += L(d, '#c6c3cb', 1));
  s += `<path d="M1185 737l14-30 18-14 6-2 10 8 6 22-4 16zM1196 698l8 2-4 14z" fill="#c9d5b0" stroke="#dfae98"/>` + L('M1195 737L1236 690M1210 737L1234 705M1198 712L1222 725M1190 726l20 10M1212 702l20 12M1180 730l24-8', '#bab8c4', 2.4);
  s += L('M1082 427L1090 439 1110 444 1125 437 1132 425 1130 410', '#bbb', 1.5);
  ['M1166 264L1150 275 1146 290 1125 355','M1007 298L1045 333 1060 333Q1072 337 1072 350L1073 360 1088 378 1094 393','M1082 427Q1072 408 1084 397T1110 391L1134 405 1165 402 1190 394 1235 388 1290 380 1320 369 1366 351','M1118 360L1117 392','M1007 382L1078 405','M1007 446L1079 422','M1129 431L1168 446 1260 478Q1290 490 1305 501L1340 522 1366 538','M1103 445L1100 460 1099 500 1103 520 1110 550 1118 590 1127 650 1133 668 1110 716 1102 736','M1133 668L1150 693 1178 722 1181 736'].forEach(d => s += L(d, O, 2));
  s += L('M1036 453L1050 453 1074 445 1083 443 1091 436M1170 447L1150 470 1145 485 1125 515 1110 549', '#f98f78', 2.4) + L('M1103 728l-2 8', '#f98f78', 2);
  ['M1060 264L1090 290 1106 303Q1117 313 1117 325L1124 365 1130 400 1136 440Q1138 448 1152 463L1160 474 1170 492 1180 507','M1154 264L1148 290 1137 345 1125 368','M1007 362L1045 357 1090 354 1116 361','M1136 440L1133 448 1123 455 1100 459Q1072 465 1064 482L1058 496 1040 520 1028 540 1026 580 1030 610 1026 650 1026 690Q1030 702 1038 708 1045 716 1048 737','M1152 463Q1160 473 1172 474L1192 476 1240 488Q1275 500 1290 515 1300 523 1320 524 1350 526 1366 541'].forEach(d => s += L(d, RL, 1.4));
  s += L('M1334 264L1350 300 1366 320', '#a5a3a8', 1.3);
  s += L('M1197 264L1180 278 1172 290 1139 333 1125 352Q1110 360 1100 371L1074 384 1065 400Q1062 412 1047 422L1037 432Q1036 442 1030 447L1020 462 1010 471 1016 477', M, 3.2);
  s += L('M1007 472Q1040 484 1070 495T1130 502Q1160 504 1175 508L1232 529 1277 545 1325 562Q1350 575 1366 588', '#8b6d77', 3.6) + L('M1007 471Q1040 483 1070 494T1130 501Q1160 503 1175 507L1232 528 1277 544 1325 561Q1350 574 1366 587', M, 2.8);
  s += L('M1016 618L1028 622 1040 631 1052 635 1060 632 1066 628 1068 633 1075 627 1080 632 1086 634 1090 640 1095 643 1105 641 1116 636 1125 625 1130 638 1134 641 1140 630 1148 625 1146 612 1150 608 1160 612 1170 610 1174 604 1182 597 1201 598 1204 606 1216 605 1238 615 1252 618 1264 628 1268 640 1276 648 1278 660 1284 674 1300 673 1310 673 1316 678 1323 676 1325 682 1314 688 1316 702 1322 708 1330 704 1340 696 1347 701 1352 698 1366 705M1016 618L1022 635 1020 650 1015 668 1009 678 1014 690 1020 708 1034 718 1034 730 1022 737', '#b096b2', 2.2);
  s += '<path d="M1028 422l4 8h-8zM1221 364l4 8h-8zM1268 434l4 8h-8zM1348 325l4 8h-8zM1109 597l4 8h-8z" fill="#d08a52"/>';
  /* western strip */
  s += many(60, 309, 342, 263, 737, 12, '#c6e0b8') + many(34, 309, 342, 263, 737, 9, '#d5d4d6') + many(26, 309, 342, 540, 737, 12, '#bcddad') + many(12, 309, 342, 263, 737, 2.4, '#9fcfe0');
  s += L('M340 284Q322 305 325 325T342 362', RL, 1.5) + L('M312 337L322 345 342 366M309 520l14-2 18-2', O, 1.8) + L('M309 413L342 405', '#e0607f', 2.2) + L('M309 443Q322 448 342 446M309 504L330 519 342 524', '#888', 1.4) + L('M309 460l20 18 13 14M309 588l33-14M309 612l24 6 9 10M309 690l10 14 22 16M318 370l-4 26 14 10M322 280l-4-16', '#b9b6c0', 1);
  s += '<rect x="332" y="505" width="18" height="17" rx="2" fill="#f2dcc0" stroke="#c9a37e"/>';
  const t = (x, y, w, z, str, a = '') => `<text x="${x}" y="${y}" textLength="${w}" font-size="${z}" lengthAdjust="spacingAndGlyphs" ${a}>${str}</text>`;
  s += `<g font-family="Noto Sans, sans-serif" fill="#3d3d3d" stroke="#fff" stroke-opacity=".75" stroke-width="2.400" paint-order="stroke" stroke-linejoin="round">` +
    t(1171, 315, 52, 12.500, 'Holsbeek') + t(1044.500, 361.500, 38, 12, 'Herent') + t(1083, 422.500, 51, 14.500, 'Leuven') + t(1072, 458, 49, 12, 'Heverlee') + t(1306.500, 416, 47.500, 12.500, 'Lubbeek') + t(1009, 525.500, 77, 12, 'Oud-Heverlee') + t(307, 345.500, 24, 12, 'Asse') +
    t(1041, 616.500, 71, 11, 'Meerdaalwoud', 'font-style="italic" fill="#5c7a5a"') +
    '<text transform="translate(1156,460) rotate(57)" font-size="9.500" fill="#666">HSL 2</text></g>';
  s += '<g font-family="Noto Sans, sans-serif" font-size="11.500" font-style="italic" fill="#a8263f" stroke="#fff" stroke-opacity=".7" stroke-width="2" paint-order="stroke">' +
    [['21',1175,281],['21',1166,294],['20',1128,344],['20',1120,355],['18',1091,377],['17',1064,397],['17',1055,414],['16',1037,428],['15',1028,448],['15',1021,460],['23',1120,507],['23',1137,508],['24',1276,551]].map(([a,x,y]) => t(x, y, 12.500, 11.500, a)).join('') + '</g>';
  s += '<rect x="1202.500" y="515" width="29.500" height="18.500" rx="2" fill="#eccbd4" stroke="#d493a7"/><rect x="1115.500" y="649.500" width="30" height="18.500" rx="2" fill="#f8e0c8" stroke="#d9ae8a"/><g font-family="Noto Sans, sans-serif" font-size="12">' + t(1208, 529, 18, 12, 'E40', 'fill="#7c2142"') + t(1120, 663.500, 20, 12, 'N25', 'fill="#6a4418"') + '</g>';
  return s;
}
def('map-canvas', ':host{display:block;flex:1;overflow:hidden;border:1px solid #a9a9a9;box-sizing:border-box;border-right-color:#b5b5b5}svg{display:block}', () => `<svg width="1056" height="472" viewBox="310 264 1056 472">${buildMap()}</svg>`);

/* ---------- status bar ---------- */
def('status-bar', `:host{display:flex;height:31px;align-items:center;padding:0 7px 0 4px;font-size:13px;box-sizing:border-box}
 .s{display:flex;align-items:center;gap:7px;width:331px;height:26px;border:1px solid #a6a6a6;border-radius:3px;background:#fff;padding-left:7px;color:#787878;font-size:14px;margin-right:681px;box-sizing:border-box}
 .n{display:flex;width:94px;height:24px;border:1px solid #a6a6a6;border-radius:3px;background:#fff;align-items:center;padding-left:3px;margin:0 7px 0 10px;box-sizing:border-box;justify-content:space-between}
 .n div{width:14px;height:100%;border-left:1px solid #b5b5b5;background:#f5f5f5;display:flex;flex-direction:column;justify-content:center;align-items:center;gap:5px;color:#555}`,
 `<div class="s"><q-icon name="glass" s="14"></q-icon><ui-text w="183">Taper pour trouver (Ctrl+K)</ui-text></div>
 <ui-text w="47">Rotation</ui-text><div class="n"><ui-text w="24">0,0 °</ui-text><div><q-icon name="up" w="8" h="4"></q-icon><q-icon name="down" w="8" h="4"></q-icon></div></div>
 <ui-check on style="margin-left:-1px"><ui-text w="35">Rendu</ui-text></ui-check><q-icon name="proj" s="15" style="margin:0 2px 0 16px"></q-icon><ui-text w="59">EPSG:3857</ui-text><q-icon name="bubble" s="16" style="margin-left:auto"></q-icon>`);

/* ---------- connection dialog ---------- */
def('ui-group', `:host{display:flex;flex-direction:column;border:1px solid #d3d3d3;border-radius:2px;box-sizing:border-box;background:var(--bg,#ebebeb)}`, '<slot></slot>');
def('ui-tabs', `:host{display:flex;flex-direction:column}.tabs{display:flex;align-items:flex-end;height:28px;position:relative;z-index:1;margin-bottom:-1px}
 .tab{height:26px;width:126px;border:1px solid #a9a9a9;background:linear-gradient(#ededed,#e2e2e2);border-radius:3px 3px 0 0;display:flex;align-items:center;justify-content:center;padding-right:1px}
 .tab.on{height:28px;width:79px;margin-left:-1px;background:#fcfcfc;border-bottom-color:#fcfcfc}
 .pane{height:156px;border:1px solid #a9a9a9;background:#fcfcfc;padding:7px 8px 0 7px}`,
 '<div class="tabs"><div class="tab"><ui-text w="101">Configurations</ui-text></div><div class="tab on"><ui-text w="53">De base</ui-text></div></div><div class="pane"><slot></slot></div>');
def('pg-dialog', `:host{display:block;background:#efefef;box-shadow:0 3px 30px 2px #000;border-radius:6px 6px 0 0}
 .bar{display:flex;align-items:center;height:27px;background:linear-gradient(#55534b,#403e39);border-radius:6px 6px 0 0;color:#dfdbd2;font-weight:700;padding-left:7px;gap:3px;border-top:1px solid #6a685f}
 .body{padding:11px 11px 0 11px;height:716px;position:relative}
 .grid{display:grid;grid-template-columns:121px 496px;grid-auto-rows:26px;row-gap:5px;align-items:center}
 .grid ui-text,.up{padding-bottom:2px}
 .auth{display:grid;grid-template-columns:124px 376px 1fr;grid-auto-rows:25px;row-gap:6px;align-items:center}
 .auth ui-field{height:26px}.auth ui-check{margin-left:6px}
 .warn{display:flex;align-items:center;gap:6px;margin:4px 0 0 124px;height:38px}.lines{display:flex;flex-direction:column}.lines ui-text{line-height:17px}
 .checks{display:flex;flex-direction:column;gap:10px;margin-top:6px}.checks ui-check{height:19px}
 .foot{display:flex;margin-top:6px}.size{position:absolute;right:1px;bottom:1px;width:12px;height:12px;background:radial-gradient(circle at 1px 1px,#aaa .8px,transparent 1px) 0 0/3px 3px;clip-path:polygon(100% 0,100% 100%,0 100%)}`,
 `<div class="bar"><q-icon name="wclose" s="16"></q-icon><q-icon name="wmax" s="16"></q-icon><ui-text w="280" style="margin:-1px 0 0 9px">Créer une Nouvelle Connexion PostGIS</ui-text></div>
 <div class="body"><ui-text w="175" style="display:block;line-height:20px">Information de connexion</ui-text>
 <ui-group style="width:645px;height:642px;margin:1px 0 0 1px;padding:12px 0 0 12px">
 <div class="grid">
 <ui-text w="33"><u>N</u>om</ui-text><ui-field><ui-text w="84">brusselsOTP</ui-text></ui-field>
 <ui-text w="48">Service</ui-text><ui-field></ui-field>
 <ui-text w="33">Hô<u>t</u>e</ui-text><ui-field><ui-text w="61">localhost</ui-text></ui-field>
 <ui-text w="29">Port</ui-text><ui-field><ui-text w="33">5432</ui-text></ui-field>
 <ui-text w="115"><u>B</u>ase de données</ui-text><ui-field><ui-text w="84">brusselsOTP</ui-text></ui-field>
 <ui-text w="66">SSL <u>m</u>ode</ui-text><ui-combo><ui-text w="64">désactive</ui-text></ui-combo></div>
 <ui-text w="111" style="margin-top:6px;line-height:18px;padding-bottom:2px;align-self:flex-start">Authentification</ui-text>
 <ui-group style="--bg:#e8e8e8;width:616px;height:201px;padding:7px 0 0 7px;margin-left:1px">
 <ui-tabs style="width:599px"><div class="auth">
 <ui-text w="118">Nom d'<u>u</u>tilisateur</ui-text><ui-field><ui-text w="60">postgres</ui-text></ui-field><ui-check on><ui-text w="51">Stocker</ui-text></ui-check>
 <ui-text w="91">Mot <u>d</u>e passe</ui-text><ui-field style="justify-content:space-between"><ui-text w="43" style="font-weight:700">••••••••</ui-text><q-icon name="eye" s="16"></q-icon></ui-field><ui-check on focus><ui-text w="51">Stocker</ui-text></ui-check></div>
 <div class="warn"><q-icon name="warn" s="24"></q-icon><div class="lines"><ui-text w="405" style="align-self:flex-start">Attention: les informations d'identification stockées en clair</ui-text><ui-text w="164" style="align-self:flex-start">dans le fichier de projet.</ui-text></div></div>
 <ui-button style="width:188px;height:25px;margin:4px 0 0 197px"><ui-text w="179">Convertir en configuration</ui-text></ui-button></ui-tabs></ui-group>
 <ui-button style="width:617px;margin-top:6px"><ui-text class="up" w="133"><u>T</u>ester la connexion</ui-text></ui-button>
 <div class="checks">
 <ui-check><ui-text w="547">N'afficher que les couches dont la géométrie est listée (dans geometry_columns)</ui-text></ui-check>
 <ui-check><ui-text w="498">Ne pas résoudre le type pour les géométries non restreintes (GEOMETRY)</ui-text></ui-check>
 <ui-check><ui-text w="274">Ne regarder que dans le schéma "public"</ui-text></ui-check>
 <ui-check><ui-text w="220">Lister les tables sans géométries</ui-text></ui-check>
 <ui-check><ui-text w="285">Utiliser la table de métadonnées estimées</ui-text></ui-check>
 <ui-check><ui-text w="592">Permettre l'enregistrement et le chargement des projets QGIS dans la base de données</ui-text></ui-check></div></ui-group>
 <div class="foot"><ui-button style="width:80px;margin-right:auto;padding-right:3px;gap:2px"><q-icon name="help" s="16"></q-icon><ui-text class="up" w="31">Aide</ui-text></ui-button><ui-button style="width:84px;margin-right:5px;padding-right:2px"><q-icon name="cross" s="13"></q-icon><ui-text class="up" w="54"><u>A</u>nnuler</ui-text></ui-button><ui-button primary style="width:80px;padding-right:6px"><q-icon name="ok" s="16"></q-icon><ui-text class="up" w="20"><u>O</u>K</ui-text></ui-button></div>
 <div class="size"></div></div>`);

/* ---------- whole desktop ---------- */
const item = (n, a = '') => `<tool-item ${a}>${ic(n, 24)}</tool-item>`;
const arrow = (ml = 0, c = '#555') => `<tool-item slot="right" style="width:8px;margin-left:${ml}px;color:${c}"><q-icon name="down" w="8" h="4"></q-icon></tool-item>`;
def('qgis-desktop', `:host{display:flex;flex-direction:column;width:1366px;height:768px;overflow:hidden;position:relative;background:#efefef}
 .main{display:flex;flex:1;min-height:0}.left{display:flex;flex-direction:column;width:303px}.split{width:6px;display:flex;align-items:center}
 .right{display:flex;flex-direction:column;flex:1;min-width:0}.split i{width:2px;height:16px;margin:0 2px;background:radial-gradient(circle at 1px 1px,#aaa .8px,transparent 1px) 0 0/2px 3px}
 pg-dialog{position:absolute;left:340px;top:25px;width:667px;height:743px;z-index:2}`,
 `<desktop-bar></desktop-bar>
 <ui-toolbar><ui-grip></ui-grip><span style="width:3px"></span>${['new','open','save','layout','manager','style'].map(n => item(n)).join('')}<span style="width:8px"></span><ui-grip></ui-grip><span style="width:4px"></span>${item('hand','active')}${['pan','zoomin','zoomout'].map(n => item(n)).join('')}
 <tool-item slot="right" style="width:16px;justify-content:flex-end">${ic('abacus',24)}</tool-item><span slot="right" style="width:5px"></span>${item('gear','slot="right"')}${item('sigma','slot="right"')}${item('table','slot="right"')}${arrow(1)}<span slot="right" style="width:3px"></span>${item('ruler','slot="right"')}${arrow(1)}<span slot="right" style="width:3px"></span>${item('tip','slot="right"')}${item('faded','slot="right"')}${arrow(1,'#ccc')}</ui-toolbar>
 <ui-toolbar><ui-grip></ui-grip><span style="width:3px"></span>${['datasource','geopkg','vect','feather','chip','mesh'].map(n => item(n)).join('')}<span style="width:3px"></span><ui-sep></ui-sep><span style="width:2px"></span>${item('virt')}<span style="width:4px"></span><ui-sep></ui-sep><span style="width:10px"></span><ui-grip></ui-grip><span style="width:3px"></span>${item('pencils')}${item('pencil')}
 <ui-grip slot="right" style="margin-left:17px"></ui-grip><span slot="right" style="width:3px"></span>${item('search','slot="right"')}<span slot="right" style="width:8px"></span><ui-grip slot="right"></ui-grip><span slot="right" style="width:3px"></span>${item('python','slot="right"')}${item('wind','slot="right"')}<span slot="right" style="width:8px"></span><ui-grip slot="right"></ui-grip><span slot="right" style="width:3px"></span>${item('book','slot="right"')}<span slot="right" style="width:8px"></span><ui-grip slot="right"></ui-grip></ui-toolbar>
 <ui-toolbar style="height:38px"><ui-grip></ui-grip><span style="width:3px"></span>${item('mobility')}</ui-toolbar>
 <div class="main"><div class="left"><browser-dock></browser-dock><layers-dock></layers-dock></div><div class="split"><i></i></div>
 <div class="right"><temporal-dock></temporal-dock><map-canvas></map-canvas></div></div>
 <status-bar></status-bar><pg-dialog></pg-dialog>`);

for (const t of texts) {
  const w = +t.getAttribute('w');
  if (!w) continue;
  const disp = t.style.display;
  t.style.display = 'inline-block';
  const r = document.createRange(); r.selectNodeContents(t);
  const now = r.getBoundingClientRect().width;
  t.style.display = disp;
  t.style.letterSpacing = ((w - now) / t.textContent.length).toFixed(3) + 'px';
}
</script>
</body>
</html>
